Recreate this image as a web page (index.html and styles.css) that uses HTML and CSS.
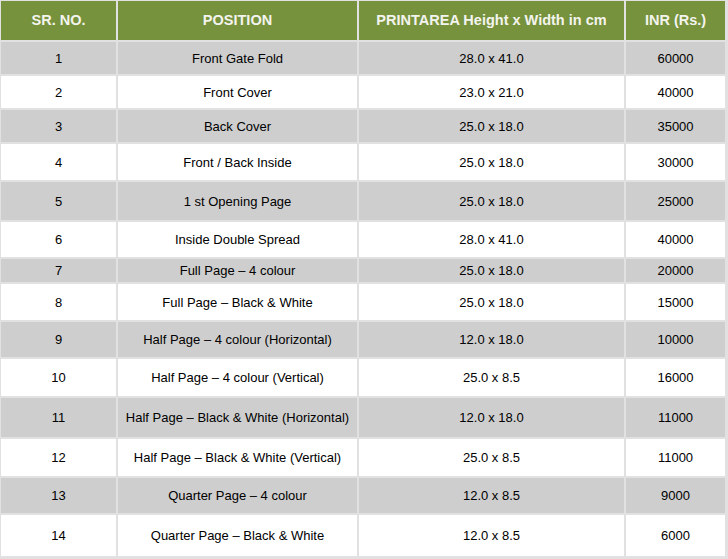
FILE: index.html
```html
<!DOCTYPE html>
<html>
<head>
<meta charset="utf-8">
<link rel="stylesheet" href="styles.css">
</head>
<body>
<table class="rates">
  <colgroup>
    <col class="c1"><col class="c2"><col class="c3"><col class="c4">
  </colgroup>
  <thead>
    <tr><th>SR. NO.</th><th>POSITION</th><th>PRINTAREA Height x Width in cm</th><th>INR (Rs.)</th></tr>
  </thead>
  <tbody>
    <tr class="odd"><td>1</td><td>Front Gate Fold</td><td>28.0 x 41.0</td><td>60000</td></tr>
    <tr><td>2</td><td>Front Cover</td><td>23.0 x 21.0</td><td>40000</td></tr>
    <tr class="odd"><td>3</td><td>Back Cover</td><td>25.0 x 18.0</td><td>35000</td></tr>
    <tr><td>4</td><td>Front / Back Inside</td><td>25.0 x 18.0</td><td>30000</td></tr>
    <tr class="odd"><td>5</td><td>1 st Opening Page</td><td>25.0 x 18.0</td><td>25000</td></tr>
    <tr><td>6</td><td>Inside Double Spread</td><td>28.0 x 41.0</td><td>40000</td></tr>
    <tr class="odd"><td>7</td><td>Full Page – 4 colour</td><td>25.0 x 18.0</td><td>20000</td></tr>
    <tr><td>8</td><td>Full Page – Black &amp; White</td><td>25.0 x 18.0</td><td>15000</td></tr>
    <tr class="odd"><td>9</td><td>Half Page – 4 colour (Horizontal)</td><td>12.0 x 18.0</td><td>10000</td></tr>
    <tr><td>10</td><td>Half Page – 4 colour (Vertical)</td><td>25.0 x 8.5</td><td>16000</td></tr>
    <tr class="odd"><td>11</td><td>Half Page – Black &amp; White (Horizontal)</td><td>12.0 x 18.0</td><td>11000</td></tr>
    <tr><td>12</td><td>Half Page – Black &amp; White (Vertical)</td><td>25.0 x 8.5</td><td>11000</td></tr>
    <tr class="odd"><td>13</td><td>Quarter Page – 4 colour</td><td>12.0 x 8.5</td><td>9000</td></tr>
    <tr><td>14</td><td>Quarter Page – Black &amp; White</td><td>12.0 x 8.5</td><td>6000</td></tr>
  </tbody>
</table>
</body>
</html>
```
FILE: styles.css
```css
html, body {
  margin: 0;
  padding: 0;
  background: #e1e1e1;
}
body {
  font-family: "Liberation Sans", Arial, sans-serif;
  font-size: 13px;
  color: #000;
  overflow: hidden;
}
.rates {
  margin: -1px 0 0 -1px;
  border-collapse: separate;
  border-spacing: 2px;
  table-layout: fixed;
  width: 728px;
  background: #e1e1e1;
}
.c1 { width: 115px; }
.c2 { width: 239px; }
.c3 { width: 265px; }
.c4 { width: 99px; }
.rates th, .rates td {
  padding: 0;
  text-align: center;
  vertical-align: middle;
  line-height: 15px;
}
.rates th {
  background: #76923c;
  color: #f4f4ee;
  font-weight: bold;
  font-size: 14.5px;
  height: 39px;
}
.rates td {
  background: #ffffff;
}
.rates tr.odd td {
  background: #cecece;
}
.rates tbody tr:nth-child(1) td { height: 32px; }
.rates tbody tr:nth-child(2) td { height: 32px; }
.rates tbody tr:nth-child(3) td { height: 32px; }
.rates tbody tr:nth-child(4) td { height: 36px; }
.rates tbody tr:nth-child(5) td { height: 38px; }
.rates tbody tr:nth-child(6) td { height: 35px; }
.rates tbody tr:nth-child(7) td { height: 23px; }
.rates tbody tr:nth-child(8) td { height: 36px; }
.rates tbody tr:nth-child(9) td { height: 35px; }
.rates tbody tr:nth-child(10) td { height: 37px; }
.rates tbody tr:nth-child(11) td { height: 39px; }
.rates tbody tr:nth-child(12) td { height: 37px; }
.rates tbody tr:nth-child(13) td { height: 35px; }
.rates tbody tr:nth-child(14) td { height: 41px; }
```
